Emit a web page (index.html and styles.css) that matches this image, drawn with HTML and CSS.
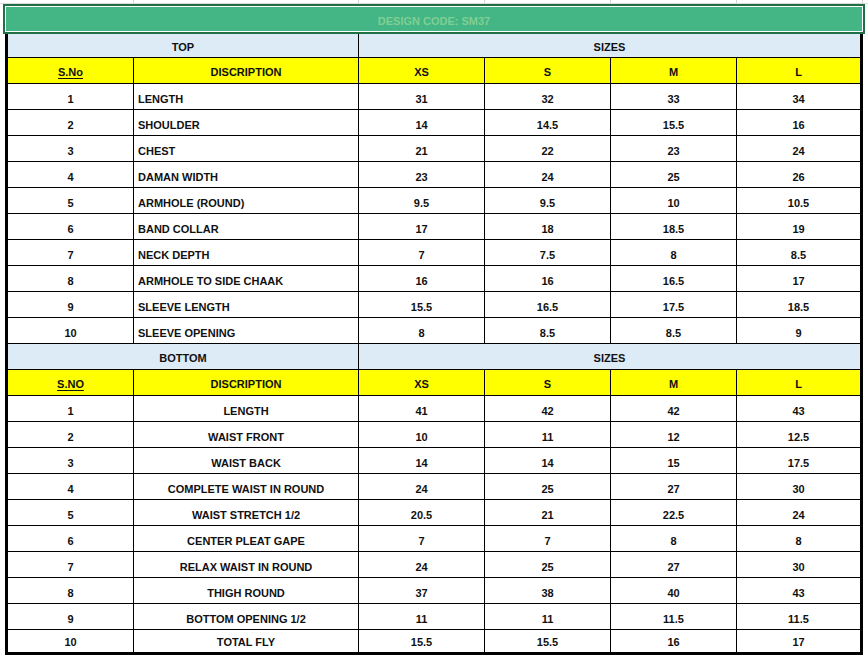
FILE: index.html
```html
<!DOCTYPE html>
<html>
<head>
<meta charset="utf-8">
<link rel="stylesheet" href="styles.css">
</head>
<body>
<div class="gridstrip"><span></span><span></span><span></span><span></span><span></span><span></span></div>
<div class="title">DESIGN CODE: SM37</div>
<div class="sheet">
  <div class="c band span2">TOP</div>
  <div class="c band span4 last">SIZES</div>
  <div class="c hdr"><u>S.No</u></div><div class="c hdr">DISCRIPTION</div><div class="c hdr">XS</div><div class="c hdr">S</div><div class="c hdr">M</div><div class="c hdr last">L</div>

  <div class="c">1</div><div class="c left">LENGTH</div><div class="c">31</div><div class="c">32</div><div class="c">33</div><div class="c last">34</div>
  <div class="c">2</div><div class="c left">SHOULDER</div><div class="c">14</div><div class="c">14.5</div><div class="c">15.5</div><div class="c last">16</div>
  <div class="c">3</div><div class="c left">CHEST</div><div class="c">21</div><div class="c">22</div><div class="c">23</div><div class="c last">24</div>
  <div class="c">4</div><div class="c left">DAMAN WIDTH</div><div class="c">23</div><div class="c">24</div><div class="c">25</div><div class="c last">26</div>
  <div class="c">5</div><div class="c left">ARMHOLE (ROUND)</div><div class="c">9.5</div><div class="c">9.5</div><div class="c">10</div><div class="c last">10.5</div>
  <div class="c">6</div><div class="c left">BAND COLLAR</div><div class="c">17</div><div class="c">18</div><div class="c">18.5</div><div class="c last">19</div>
  <div class="c">7</div><div class="c left">NECK DEPTH</div><div class="c">7</div><div class="c">7.5</div><div class="c">8</div><div class="c last">8.5</div>
  <div class="c">8</div><div class="c left">ARMHOLE TO SIDE CHAAK</div><div class="c">16</div><div class="c">16</div><div class="c">16.5</div><div class="c last">17</div>
  <div class="c">9</div><div class="c left">SLEEVE LENGTH</div><div class="c">15.5</div><div class="c">16.5</div><div class="c">17.5</div><div class="c last">18.5</div>
  <div class="c">10</div><div class="c left">SLEEVE OPENING</div><div class="c">8</div><div class="c">8.5</div><div class="c">8.5</div><div class="c last">9</div>

  <div class="c band span2">BOTTOM</div>
  <div class="c band span4 last">SIZES</div>
  <div class="c hdr"><u>S.NO</u></div><div class="c hdr">DISCRIPTION</div><div class="c hdr">XS</div><div class="c hdr">S</div><div class="c hdr">M</div><div class="c hdr last">L</div>

  <div class="c">1</div><div class="c">LENGTH</div><div class="c">41</div><div class="c">42</div><div class="c">42</div><div class="c last">43</div>
  <div class="c">2</div><div class="c">WAIST FRONT</div><div class="c">10</div><div class="c">11</div><div class="c">12</div><div class="c last">12.5</div>
  <div class="c">3</div><div class="c">WAIST BACK</div><div class="c">14</div><div class="c">14</div><div class="c">15</div><div class="c last">17.5</div>
  <div class="c">4</div><div class="c">COMPLETE WAIST IN ROUND</div><div class="c">24</div><div class="c">25</div><div class="c">27</div><div class="c last">30</div>
  <div class="c">5</div><div class="c">WAIST STRETCH 1/2</div><div class="c">20.5</div><div class="c">21</div><div class="c">22.5</div><div class="c last">24</div>
  <div class="c">6</div><div class="c">CENTER PLEAT GAPE</div><div class="c">7</div><div class="c">7</div><div class="c">8</div><div class="c last">8</div>
  <div class="c">7</div><div class="c">RELAX WAIST IN ROUND</div><div class="c">24</div><div class="c">25</div><div class="c">27</div><div class="c last">30</div>
  <div class="c">8</div><div class="c">THIGH ROUND</div><div class="c">37</div><div class="c">38</div><div class="c">40</div><div class="c last">43</div>
  <div class="c">9</div><div class="c">BOTTOM OPENING 1/2</div><div class="c">11</div><div class="c">11</div><div class="c">11.5</div><div class="c last">11.5</div>
  <div class="c end">10</div><div class="c end">TOTAL FLY</div><div class="c end">15.5</div><div class="c end">15.5</div><div class="c end">16</div><div class="c end last">17</div>
</div>
</body>
</html>
```
FILE: styles.css
```css
html, body {
  margin: 0;
  padding: 0;
  background: #ffffff;
}
body {
  font-family: "Liberation Sans", Arial, sans-serif;
  font-weight: bold;
  font-size: 11px;
  color: #111111;
  width: 868px;
  height: 657px;
  overflow: hidden;
}
.gridstrip {
  display: grid;
  grid-template-columns: 134px 225px 126px 126px 126px 126px;
  height: 4px;
  box-sizing: border-box;
  border-bottom: 1px solid #d9d9d9;
}
.gridstrip span {
  border-right: 1px solid #d4d4d4;
}
.title {
  margin-left: 3px;
  width: 862px;
  height: 30px;
  box-sizing: border-box;
  border: 2px solid #1f7145;
  box-shadow: inset 0 0 0 1px #ffffff;
  background: #44b585;
  color: #80cf92;
  display: flex;
  align-items: center;
  justify-content: center;
  padding-top: 3px;
  padding-left: 0;
}
.sheet {
  margin-left: 5px;
  width: 858px;
  box-sizing: border-box;
  border: 3px solid #000000;
  border-top: 0;
  display: grid;
  grid-template-columns: 126px 225px 126px 126px 126px 123px;
  grid-template-rows: 24px 26px repeat(10, 26px) 26px 26px repeat(9, 26px) 22px;
}
.c {
  box-sizing: border-box;
  border-right: 1px solid #000000;
  border-bottom: 1px solid #000000;
  display: flex;
  align-items: center;
  justify-content: center;
  padding-top: 4px;
  white-space: nowrap;
}
.c.last {
  border-right: 0;
}
.c.end {
  border-bottom: 0;
  padding-top: 2px;
}
.left {
  justify-content: flex-start;
  padding-left: 4px;
}
.band {
  background: #ddebf7;
  padding-top: 2px;
}
.span2 {
  grid-column: span 2;
}
.span4 {
  grid-column: span 4;
}
.hdr {
  background: #ffff00;
  padding-top: 2px;
}
.hdr u {
  text-decoration: underline;
  text-underline-offset: 2px;
}
```
